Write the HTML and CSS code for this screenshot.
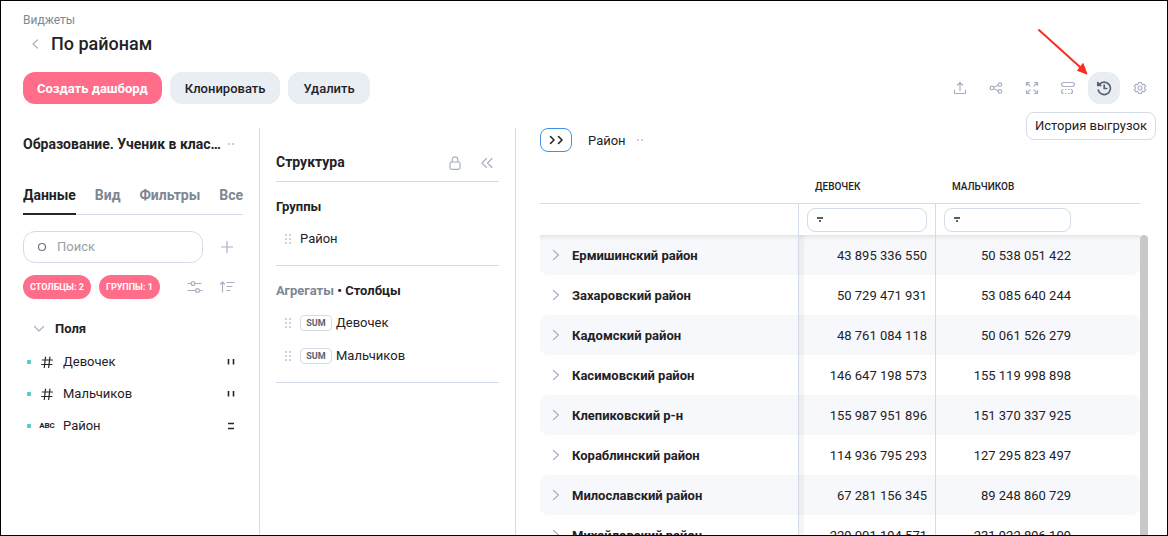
FILE: index.html
```html
<!DOCTYPE html>
<html lang="ru">
<head>
<meta charset="utf-8">
<title>По районам</title>
<link rel="stylesheet" href="styles.css">
</head>
<body>
<svg class="defs" width="0" height="0" aria-hidden="true">
  <symbol id="right" viewBox="0 0 8 12"><path d="M1.5 1.5 6.5 6l-5 4.5"/></symbol>
  <symbol id="grip" viewBox="0 0 8 10"><path d="M1 1h2M5 1h2M1 5h2M5 5h2M1 9h2M5 9h2"/></symbol>
  <symbol id="hash" viewBox="0 0 16 16"><path d="M6.500 3 5.300 13.500M10.900 3 9.700 13.500M3.300 6h10.200M2.700 10.500h10.200"/></symbol>
  <symbol id="funnel" viewBox="0 0 6 5"><path d="M0 1h6M2 4h2"/></symbol>
</svg>
<div class="page">
  <header class="header">
    <a class="crumb" href="#">Виджеты</a>
    <div class="heading">
      <button class="back" aria-label="Назад"><svg class="icon" width="8" height="12" viewBox="0 0 8 12"><path d="M6.500 2 2 6l4.500 4"/></svg></button>
      <h1>По районам</h1>
    </div>
    <div class="actions">
      <button class="btn primary">Создать дашборд</button>
      <button class="btn">Клонировать</button>
      <button class="btn">Удалить</button>
      <div class="tools">
        <button class="tool" aria-label="Выгрузить"><svg class="icon" width="16" height="16" viewBox="0 0 16 16"><path d="M8 10.500V2.500M5.500 5 8 2.500 10.500 5M2.500 10v3.500h11V10"/></svg></button>
        <button class="tool" aria-label="Поделиться"><svg class="icon" width="16" height="16" viewBox="0 0 16 16"><circle cx="4" cy="8" r="1.800"/><circle cx="11.900" cy="4.600" r="1.800"/><circle cx="11.900" cy="11.400" r="1.800"/><path d="m5.800 7.200 4.400-1.900M5.800 8.800l4.400 1.900"/></svg></button>
        <button class="tool" aria-label="На весь экран"><svg class="icon" width="16" height="16" viewBox="0 0 16 16"><path d="M2.500 5.500v-3h3M10.500 2.500h3v3M13.500 10.500v3h-3M5.500 13.500h-3v-3M2.500 2.500l3.500 3.500M13.500 2.500l-3.500 3.500M13.500 13.500l-3.500-3.500M2.500 13.500l3.500-3.500"/></svg></button>
        <button class="tool" aria-label="Расположение"><svg class="icon" width="16" height="16" viewBox="0 0 16 16"><rect x="1.500" y="2.500" width="13" height="4" rx="2"/><path class="dash" d="M3.500 9.500a2 2 0 0 0 0 4M10.500 9.500a2 2 0 0 1 0 4M5 9.500h1.500M8 9.500h1.500M5 13.500h1.500M8 13.500h1.500"/></svg></button>
        <div class="history">
          <button class="tool active" aria-label="История выгрузок" aria-describedby="tip"><svg class="icon" width="16" height="16" viewBox="0 0 16 16"><path d="M3.300 4.500A6.200 6.200 0 1 1 2.200 10M1.800 2.500v3h3zM8.200 5.200v3.300h2.500"/></svg></button>
          <svg class="pointer" width="52" height="48" viewBox="0 0 52 48"><path class="shaft" d="M2 2l41 37"/><path class="tip-head" d="M50 46 40.500 42.500 46 35.500z"/></svg>
          <div class="tooltip" id="tip" role="tooltip">История выгрузок</div>
        </div>
        <button class="tool" aria-label="Настройки"><svg class="icon" width="16" height="16" viewBox="0 0 16 16"><path d="M6.700 2.500h2.600l.5 1.500 1 .6 1.600-.3 1.300 2.200L12.700 7.400v1.200l1 .9-1.300 2.200-1.600-.3-1 .6-.5 1.500H6.700L6.200 12l-1-.6-1.600.3-1.300-2.200 1-.9V7.400l-1-.9 1.300-2.200 1.600.3 1-.6z"/><circle cx="8" cy="8" r="2"/></svg></button>
      </div>
    </div>
  </header>

  <main class="main">
    <aside class="panel data">
      <div class="source"><h2>Образование. Ученик в клас…</h2><button class="dots" aria-label="Меню"><i></i><i></i></button></div>
      <nav class="tabs"><a class="current" href="#">Данные</a><a href="#">Вид</a><a href="#">Фильтры</a><a href="#">Все</a></nav>
      <div class="searchrow">
        <label class="search"><svg class="icon" width="10" height="10" viewBox="0 0 10 10"><circle cx="5" cy="5" r="3.500"/></svg><input type="text" placeholder="Поиск" aria-label="Поиск"></label>
        <button class="plain" aria-label="Добавить"><svg class="icon" width="12" height="12" viewBox="0 0 12 12"><path d="M6 .5v11M.5 6h11"/></svg></button>
      </div>
      <div class="chips">
        <button class="chip">СТОЛБЦЫ: 2</button><button class="chip">ГРУППЫ: 1</button>
        <button class="plain filter" aria-label="Параметры"><svg class="icon" width="16" height="14" viewBox="0 0 16 14"><path d="M1 3.500h3M8 3.500h6M1 10.500h7.500M12.500 10.500H15"/><circle cx="6" cy="3.500" r="1.900"/><circle cx="10.500" cy="10.500" r="1.900"/></svg></button>
        <button class="plain" aria-label="Сортировка"><svg class="icon" width="16" height="14" viewBox="0 0 16 14"><path d="M3.500 12V2M1.500 4 3.500 2 5.500 4M8 2.500h7M8 6.500h5M8 10.500h3"/></svg></button>
      </div>
      <button class="fold"><svg class="icon" width="12" height="8" viewBox="0 0 12 8"><path d="m1.500 1.500 4.500 4.500 4.500-4.500"/></svg>Поля</button>
      <ul class="fields">
        <li><i class="mark"></i><svg class="icon dark" width="16" height="16"><use href="#hash"/></svg><span>Девочек</span><svg class="icon dark kind" width="8" height="8" viewBox="0 0 8 8"><path d="M1.500 1v5.500M6.500 1v5.500"/></svg></li>
        <li><i class="mark"></i><svg class="icon dark" width="16" height="16"><use href="#hash"/></svg><span>Мальчиков</span><svg class="icon dark kind" width="8" height="8" viewBox="0 0 8 8"><path d="M1.500 1v5.500M6.500 1v5.500"/></svg></li>
        <li><i class="mark"></i><b class="abc">ABC</b><span>Район</span><svg class="icon dark kind" width="8" height="8" viewBox="0 0 8 8"><path d="M1 1.500h6M1 6.500h6"/></svg></li>
      </ul>
    </aside>

    <section class="panel structure">
      <div class="structhead"><h2>Структура</h2>
        <button class="plain" aria-label="Закрепить"><svg class="icon" width="12" height="16" viewBox="0 0 12 16"><rect x="1" y="7" width="10" height="7.300" rx="1.500"/><path d="M3.200 7V4.700a2.800 2.800 0 0 1 5.600 0V7"/></svg></button>
        <button class="plain" aria-label="Свернуть"><svg class="icon" width="12" height="12" viewBox="0 0 12 12"><path d="M5.500 1.500 1 6l4.500 4.500M11 1.500 6.500 6l4.500 4.500"/></svg></button>
      </div>
      <div class="group">
        <h3>Группы</h3>
        <ul><li><svg class="grip" width="8" height="10"><use href="#grip"/></svg>Район</li></ul>
      </div>
      <div class="group">
        <h3><span class="muted">Агрегаты</span> • Столбцы</h3>
        <ul>
          <li><svg class="grip" width="8" height="10"><use href="#grip"/></svg><button class="sum">SUM</button>Девочек</li>
          <li><svg class="grip" width="8" height="10"><use href="#grip"/></svg><button class="sum">SUM</button>Мальчиков</li>
        </ul>
      </div>
    </section>

    <section class="result">
      <div class="grouping"><button class="expand" aria-label="Развернуть"><svg class="icon" width="14" height="10" viewBox="0 0 14 10"><path d="m1.500 1.500 3.500 3.500-3.500 3.500M9.500 1.500l3.500 3.500-3.500 3.500"/></svg></button><span>Район</span><button class="dots" aria-label="Меню"><i></i><i></i></button></div>
      <div class="scroller">
        <table>
          <colgroup><col><col class="c-girls"><col class="c-boys"><col class="c-rest"></colgroup>
          <thead>
            <tr class="names"><th></th><th scope="col">ДЕВОЧЕК</th><th scope="col">МАЛЬЧИКОВ</th><th></th></tr>
            <tr class="filters"><td></td><td><label class="filterbox"><svg width="6" height="5"><use href="#funnel"/></svg><input type="text" aria-label="Фильтр: девочек"></label></td><td><label class="filterbox"><svg width="6" height="5"><use href="#funnel"/></svg><input type="text" aria-label="Фильтр: мальчиков"></label></td><td></td></tr>
          </thead>
          <tbody>
            <tr><th scope="row"><svg class="icon" width="8" height="12"><use href="#right"/></svg>Ермишинский район</th><td>43 895 336 550</td><td>50 538 051 422</td><td></td></tr>
            <tr><th scope="row"><svg class="icon" width="8" height="12"><use href="#right"/></svg>Захаровский район</th><td>50 729 471 931</td><td>53 085 640 244</td><td></td></tr>
            <tr><th scope="row"><svg class="icon" width="8" height="12"><use href="#right"/></svg>Кадомский район</th><td>48 761 084 118</td><td>50 061 526 279</td><td></td></tr>
            <tr><th scope="row"><svg class="icon" width="8" height="12"><use href="#right"/></svg>Касимовский район</th><td>146 647 198 573</td><td>155 119 998 898</td><td></td></tr>
            <tr><th scope="row"><svg class="icon" width="8" height="12"><use href="#right"/></svg>Клепиковский р-н</th><td>155 987 951 896</td><td>151 370 337 925</td><td></td></tr>
            <tr><th scope="row"><svg class="icon" width="8" height="12"><use href="#right"/></svg>Кораблинский район</th><td>114 936 795 293</td><td>127 295 823 497</td><td></td></tr>
            <tr><th scope="row"><svg class="icon" width="8" height="12"><use href="#right"/></svg>Милославский район</th><td>67 281 156 345</td><td>89 248 860 729</td><td></td></tr>
            <tr><th scope="row"><svg class="icon" width="8" height="12"><use href="#right"/></svg>Михайловский район</th><td>229 001 194 571</td><td>231 922 896 109</td><td></td></tr>
          </tbody>
        </table>
        <div class="scrollbar"></div>
      </div>
    </section>
  </main>
</div>
</body>
</html>
```
FILE: styles.css
```css
* { box-sizing: border-box; }
body { margin: 0; background: #fff; color: #1f2226; font: 13px/16px Roboto, "Open Sans", sans-serif; }
h1, h2, h3, ul { margin: 0; padding: 0; font-size: inherit; }
ul { list-style: none; }
button { border: 0; padding: 0; background: none; font: inherit; color: inherit; }
a { color: inherit; text-decoration: none; }
input { border: 0; outline: 0; padding: 0; background: none; font: inherit; width: 100%; min-width: 0; }
svg { flex: none; }
.defs { position: absolute; }
.icon { display: block; fill: none; stroke: #a9b0c4; stroke-width: 1.2; stroke-linecap: round; stroke-linejoin: round; }
.icon.dark { stroke: #24272b; }

.page { height: 100vh; border: 1px solid #000; display: flex; flex-direction: column; overflow: hidden; }
.header { flex: none; padding: 11px 11px 24px 22px; }
.crumb { display: block; font-size: 12px; color: #7d8794; }
.heading { display: flex; align-items: center; gap: 12px; height: 32px; padding-left: 8px; }
.heading h1 { font-size: 18px; line-height: 24px; font-weight: 500; }
.actions { display: flex; gap: 8px; margin-top: 12px; }
.btn { height: 32px; padding: 2px 15px 0; border-radius: 12px; background: #e9edf4; font-weight: 500; white-space: nowrap; }
.btn.primary { background: #ff6d8a; color: #fff; font-weight: 700; padding: 2px 14px 0; }
.tools { display: flex; gap: 4px; margin-left: auto; }
.tool { width: 32px; height: 32px; border-radius: 12px; display: flex; align-items: center; justify-content: center; }
.tool.active { background: #e9edf2; }
.tool.active .icon { stroke: #59636f; stroke-width: 1.7; }
.dash { stroke-linecap: butt; }
.history { position: relative; }
.pointer { position: absolute; right: 32px; bottom: 28px; margin-right: -1px; }
.shaft { stroke: #fb2c21; stroke-width: 2; stroke-linecap: round; }
.tip-head { fill: #fb2c21; stroke: #fb2c21; }
.tooltip { position: absolute; z-index: 2; top: 40px; right: -36px; padding: 5px 8px; border: 1px solid #d3dce6; border-radius: 8px; background: #fff; white-space: nowrap; }

.main { flex: 1; min-height: 0; display: flex; }
.panel { flex: none; border-right: 1px solid #d3dce6; }
.data { width: 259px; padding: 0 16px 0 22px; }
.source { display: flex; align-items: center; justify-content: space-between; height: 32px; padding-right: 9px; }
.source h2 { font-size: 14px; font-weight: 700; white-space: nowrap; }
.dots { display: flex; gap: 2px; }
.dots i { width: 2px; height: 2px; background: #c9d0de; }
.tabs { display: flex; justify-content: space-between; margin-top: 16px; border-bottom: 1px solid #d3dce6; font-size: 14px; font-weight: 700; color: #7d8794; }
.tabs a { height: 39px; padding-top: 11px; margin-bottom: -1px; }
.tabs .current { color: #1f2226; border-bottom: 2px solid #24272b; }
.searchrow { display: flex; align-items: center; justify-content: space-between; margin-top: 16px; padding-right: 10px; }
.search { display: flex; align-items: center; gap: 10px; width: 180px; height: 32px; padding: 0 13px; border: 1px solid #d3dce6; border-radius: 12px; }
.search .icon { stroke: #6b7683; }
.search input::placeholder { color: #9b9fa5; opacity: 1; }
.chips { display: flex; align-items: center; gap: 8px; margin-top: 12px; padding-right: 8px; }
.chip { height: 24px; padding: 0 7px; border-radius: 12px; background: #ff6d8a; color: #fff; font-size: 9px; font-weight: 700; white-space: nowrap; }
.filter { margin: 0 16px 0 auto; margin-right: 8px; }
.fold { display: flex; align-items: center; gap: 10px; height: 32px; margin-top: 14px; padding-left: 10px; font-weight: 700; }
.fields li { display: flex; align-items: center; height: 32px; padding-right: 8px; }
.fields { padding: 1px 0 0 4px; }
.mark { width: 4px; height: 4px; border-radius: 1px; background: #4ecdcb; margin-right: 8px; }
.fields span { margin-left: 8px; }
.abc { width: 16px; font-size: 8px; text-align: center; }
.kind { margin-left: auto; stroke-linecap: butt; stroke-width: 1.6; }

.structure { width: 256px; padding: 19px 16px 0; }
.structhead { display: flex; align-items: center; gap: 20px; height: 35px; padding: 0 6px 2px 0; border-bottom: 1px solid #d3dce6; }
.structhead h2 { margin-right: auto; font-size: 14px; line-height: 14px; padding-bottom: 2px; }
.group { padding: 16px 0 10px; border-bottom: 1px solid #d3dce6; }
.group h3 { line-height: 18px; margin-bottom: 6px; }
.group li { display: flex; align-items: center; height: 33px; padding-left: 8px; }
.muted { color: #7d8794; }
.grip { margin-right: 8px; stroke: #cdd2de; stroke-width: 2; }
.sum { width: 32px; height: 16px; margin-right: 4px; border: 1px solid #d3dce6; border-radius: 4px; font-size: 9px; line-height: 12px; font-weight: 700; color: #59636f; }

.result { flex: 1; min-width: 0; display: flex; flex-direction: column; padding: 0 19px 0 24px; }
.grouping { display: flex; align-items: center; height: 24px; }
.grouping span { padding-top: 1px; }
.expand { width: 32px; height: 24px; margin-right: 16px; border: 1px solid #3f92e4; border-radius: 8px; display: flex; align-items: center; justify-content: center; }
.expand .icon { stroke: #24272b; stroke-width: 1.6; }
.grouping .dots { margin-left: 11px; }
.scroller { flex: 1; min-height: 0; display: flex; overflow: hidden; }
table { flex: 1; width: 100%; height: max-content; table-layout: fixed; border-spacing: 0; }
.c-girls { width: 137px; }
.c-boys { width: 144px; }
.c-rest { width: 60px; }
th, td { padding: 0; white-space: nowrap; }
.names th { height: 52px; padding: 19px 0 0 16px; text-align: left; font-size: 10px; font-weight: 500; border-bottom: 1px solid #d3dce6; }
.filters td { height: 31px; padding: 0 8px; }
.filterbox { display: flex; align-items: center; gap: 8px; height: 24px; padding: 0 9px; border: 1px solid #d3dce6; border-radius: 8px; }
.filterbox svg { stroke: #24272b; stroke-width: 1.6; }
.filters td:nth-child(-n+2), tbody th, tbody td:nth-child(2) { border-right: 1px solid #d3dce6; }
tbody th, tbody td { height: 40px; padding-top: 2px; text-align: right; }
tbody td { padding-right: 8px; }
tbody th { text-align: left; padding-left: 12px; }
tbody th .icon { display: inline-block; vertical-align: -1px; margin-right: 12px; }
tbody tr:nth-child(odd) > * { background-color: #f7f8fc; }
tbody tr:nth-child(odd) > :first-child { border-radius: 8px 0 0 8px; }
tbody tr:nth-child(odd) > :last-child { border-radius: 0 8px 8px 0; }
tbody td:nth-child(2) { background-image: linear-gradient(90deg, #0000000c, #0000000a 4px, #00000000 6px); }
tbody tr:first-child > * { box-shadow: inset 0 5px 4px -3px #00000018; }
tbody tr:first-child > :first-child { border-radius: 0 0 0 8px; }
tbody tr:first-child > :last-child { border-radius: 0 0 8px 0; }
.filters td:nth-child(3), tbody td:nth-child(3) { padding-right: 9px; }
.scrollbar { width: 8px; margin-top: 83px; border-radius: 4px 4px 0 0; background: #c8c8c8; }
```
